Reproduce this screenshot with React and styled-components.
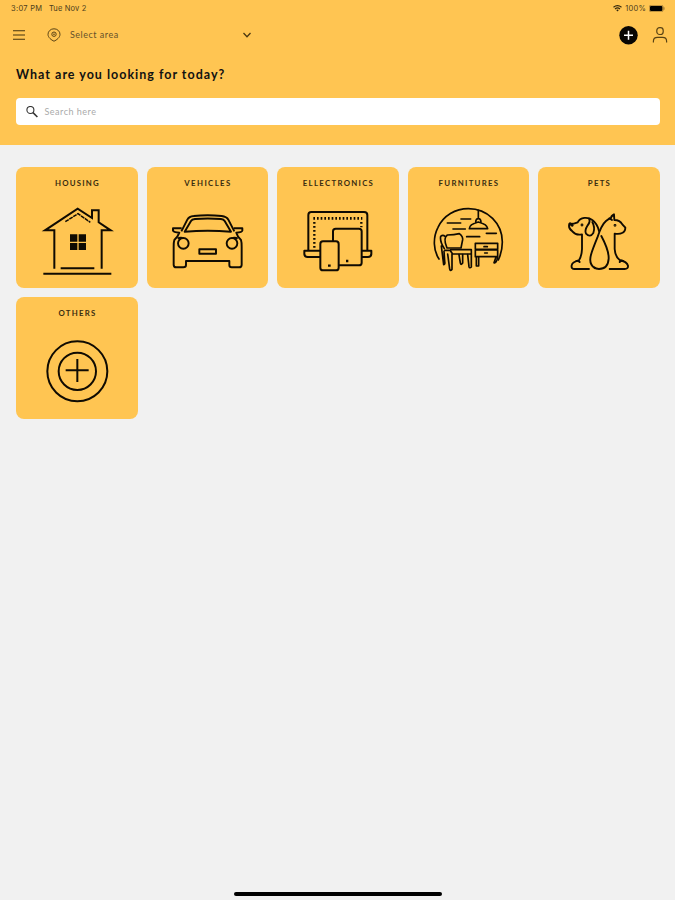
import React from 'react';
import styled, { createGlobalStyle } from 'styled-components';

const GlobalStyle = createGlobalStyle`
  * {
    box-sizing: border-box;
  }
  body {
    margin: 0;
    background: #f1f1f1;
    color: #111;
    font-family: Lato, 'Open Sans', sans-serif;
  }
`;

const Screen = styled.div`
  display: flex;
  flex-direction: column;
  height: 900px;
  overflow: hidden;
`;

const Header = styled.header`
  height: 145px;
  background: #ffc552;
`;

const StatusBar = styled.div`
  display: flex;
  align-items: center;
  height: 17px;
  padding: 0 10px 0 11px;
  font-family: Inter, sans-serif;
  font-size: 7.5px;
  color: #4d3d1c;
  svg {
    display: block;
  }
`;

const StatusText = styled.span`
  margin-right: ${(props) => props.$gap || 0}px;
  letter-spacing: ${(props) => props.$spacing || 0}px;
`;

const StatusRight = styled.div`
  display: flex;
  align-items: center;
  gap: 3px;
  margin-left: auto;
`;

const NavBar = styled.nav`
  display: flex;
  align-items: center;
  height: 36px;
  padding: 0 7.5px 0 12px;
  svg {
    display: block;
  }
`;

const AreaSelect = styled.div`
  display: flex;
  align-items: center;
  justify-content: space-between;
  width: 205px;
  margin-left: 21px;
  font-size: 9px;
  letter-spacing: 0.5px;
  color: #66512a;
`;

const AreaLabel = styled.span`
  flex: 1;
  margin-left: 9px;
  line-height: 12px;
  margin-bottom: 1px;
`;

const NavActions = styled.div`
  display: flex;
  align-items: center;
  gap: 14px;
  margin-left: auto;
`;

const Heading = styled.h1`
  margin: 13px 16px 0;
  font-size: 12.5px;
  line-height: 18px;
  font-weight: 700;
  letter-spacing: 1px;
  white-space: nowrap;
`;

const SearchBox = styled.div`
  display: flex;
  align-items: center;
  gap: 7px;
  height: 27px;
  margin: 14px 15.5px 0;
  padding-left: 10px;
  border-radius: 4px;
  background: #fff;
  font-size: 9px;
  letter-spacing: 0.5px;
  color: #aaa;
`;

const Grid = styled.main`
  display: grid;
  grid-template-columns: repeat(5, 1fr);
  grid-auto-rows: 121.8px;
  gap: 8.7px;
  flex: 1;
  padding: 21.6px 15.2px 0 16px;
`;

const Card = styled.div`
  display: flex;
  flex-direction: column;
  align-items: center;
  padding-top: 10px;
  border-radius: 8px;
  background: #ffc552;
  svg {
    display: block;
    width: 76px;
    height: 76px;
    margin-top: 16px;
    fill: none;
    stroke: #100b02;
    stroke-width: ${(props) => props.$stroke || 6};
  }
`;

const CardTitle = styled.h2`
  margin: 0;
  padding-left: 1.2px;
  font-size: 7.8px;
  line-height: 12px;
  font-weight: 700;
  letter-spacing: ${(props) => props.$spacing}px;
  color: #3a2c10;
`;

const HomeIndicator = styled.div`
  align-self: center;
  width: 208px;
  height: 4px;
  margin-bottom: 4px;
  border-radius: 2px;
  background: #000;
`;

const WifiIcon = () => (
  <svg width="9" height="7" viewBox="0 0 9 7" fill="none" stroke="#33270d" strokeWidth="1.2">
    <path d="M.5 2.3Q4.5-.9 8.5 2.3M2 3.9Q4.5 2 7 3.9" />
    <path d="M3.2 5 4.5 6.4 5.8 5Q4.5 4.2 3.2 5Z" fill="#33270d" stroke="none" />
  </svg>
);

const BatteryIcon = () => (
  <svg width="16" height="7" viewBox="0 0 16 7">
    <rect x=".3" y=".3" width="13.8" height="6.4" rx="1.6" fill="none" stroke="#7d602a" strokeWidth=".6" />
    <rect x="1" y="1" width="12.4" height="5" rx="1" fill="#000" />
    <path d="M15 2.3v2.4" stroke="#7d602a" strokeWidth=".8" />
  </svg>
);

const MenuIcon = () => (
  <svg width="14" height="12" viewBox="0 0 14 12" stroke="#44350f" strokeWidth="1.1">
    <path d="M1 1.8h12M1 6h12M1 10.2h12" />
  </svg>
);

const PinIcon = () => (
  <svg width="14" height="14" viewBox="0 0 14 14" fill="none" stroke="#5b4416" strokeWidth="1">
    <path d="M7 13.2C4.4 12 1 9.6 1 6.3a6 5.5 0 0 1 12 0C13 9.6 9.6 12 7 13.2Z" />
    <circle cx="7" cy="6.2" r="2.2" />
    <circle cx="7" cy="6.2" r=".4" />
  </svg>
);

const ChevronIcon = () => (
  <svg width="10" height="8" viewBox="0 0 10 8" fill="none" stroke="#4a3811" strokeWidth="1.3">
    <path d="M1.5 2 5 5.7 8.5 2" />
  </svg>
);

const AddIcon = () => (
  <svg width="19" height="19" viewBox="0 0 19 19">
    <circle cx="9.5" cy="9.2" r="9.2" fill="#080603" />
    <path d="M9.5 4.7v9M5 9.2h9" stroke="#fff" strokeWidth="1.5" />
  </svg>
);

const UserIcon = () => (
  <svg width="16" height="18" viewBox="0 0 16 18" fill="none" stroke="#594314" strokeWidth="1.2">
    <rect x="4.8" y="1.7" width="6.4" height="6.8" rx="2.8" />
    <path d="M1.4 16.5v-1.3Q1.4 11.4 5.5 11.4h5q4.1 0 4.1 3.8v1.3" />
  </svg>
);

const SearchIcon = () => (
  <svg width="12" height="12" viewBox="0 0 12 12" fill="none" stroke="#333" strokeWidth="1.1">
    <circle cx="4.4" cy="4" r="3.5" />
    <path d="m7 6.6 4.4 4.4" strokeWidth="1.5" />
  </svg>
);

const HouseIcon = () => (
  <svg viewBox="87 135 228 228">
    <path d="M133 326V211H105L203 146l43 28V151h20v36l36 24H275V326" />
    <path d="m166 185 38-24 37 26" strokeWidth="4.5" strokeDasharray="12 2" />
    <path d="M152 324.5H253M100 341H304" />
    <path
      d="M180 223h22v22h-22ZM206 223h22v22h-22ZM180 249h22v21h-22ZM206 249h22v21h-22Z"
      fill="#100b02"
      stroke="none"
    />
  </svg>
);

const CarIcon = () => (
  <svg viewBox="13 -1 228 228" strokeLinejoin="round">
    <path d="M50 78 68 43Q73 33 87 32Q129 27 171 32Q186 34 191 43L209 78" />
    <path d="M60 79 79 47Q82 42 91 41Q129 38 169 41Q177 42 180 47L199 79Q129 74 60 79Z" />
    <path d="M51 69H25V76Q27 81 44 82Q40 94 29 104Q27 110 27 124V178Q27 186 35 186H56Q64 186 64 179V167H194V179Q194 186 201 186H223Q231 186 231 178V124Q231 110 229 104Q218 94 215 82Q232 81 233 76V69H207" />
    <circle cx="56" cy="114" r="16" />
    <circle cx="202" cy="114" r="16" />
    <path d="M39 100Q45 96 54 98M219 100Q213 96 204 98" />
    <path d="M104 132H154V145H104Z" />
  </svg>
);

const DevicesIcon = () => (
  <svg viewBox="85 135 228 228" strokeLinejoin="round">
    <path d="M110 272V165Q110 156 119 156H277Q287 156 287 165V272" />
    <path d="M146 291H108Q98 291 98 281V272H146M270 272H299V281Q299 291 289 291H270" />
    <path d="M125 175H272" strokeWidth="8" strokeDasharray="5 6" />
    <path d="M128 186V264M269 186V202" strokeWidth="7" strokeDasharray="5 7" />
    <path d="M184 244V214Q184 206 192 206H262Q270 206 270 214V308Q270 316 262 316H201" />
    <rect x="146" y="244" width="55" height="87" rx="8" />
    <path d="M223 303h7M169 317h8" strokeWidth="7" />
  </svg>
);

const FurnitureIcon = () => (
  <svg viewBox="6 9 228 228" strokeLinecap="round" strokeLinejoin="round">
    <path d="M33 171C16 146 14 107 30 76C47 40 82 20 121 20C179 20 223 65 223 120Q223 148 211 174" />
    <path d="M151 25v22M143 62q0-12 8-12t8 12M124 80q0-13 27-20q27 7 28 20Z" />
    <path d="M99 51h29M58 63h40M75 81h37M116 104h39M175 94h30" />
    <path d="M57 138Q44 108 58 99Q79 99 94 95Q105 103 104 113L99 138Z" />
    <path d="M49 140Q35 118 38 103Q45 97 51 103M40 132L47 188Q52 187 50 178L48 148" />
    <path d="M50 145H66L74 156H130V143H68M72 156V202Q66 209 65 201L59 156" />
    <path d="M130 157V195Q125 200 123 194L119 158M104 158V183Q98 191 97 183L93 158" />
    <path d="M142 124H209V142H142ZM142 144H209V164H142ZM145 165V192H152V165M204 165L198 182Q205 185 209 166" />
    <path d="M168 134h10M170 153h8" />
  </svg>
);

const PetsIcon = () => (
  <svg viewBox="4 -2 228 228" strokeLinecap="round" strokeLinejoin="round">
    <path d="M118 76Q113 54 98 43C85 33 62 34 54 50Q44 55 29 55Q25 67 38 77Q49 90 67 86V130Q66 151 58 164Q38 168 36 179Q34 190 45 190H88" />
    <path d="M88 39Q93 48 84 59Q74 75 79 84Q91 97 101 82Q107 66 98 49" />
    <path d="M31 54l7 5" strokeWidth="8" />
    <path d="M60 169q-5-5-10-3M180 169q5-5 10-3" />
    <path d="M106 188Q86 175 94 147Q99 130 113 96Q125 58 139 46Q147 39 154 37Q154 31 163 26L164 43Q181 43 188 56L197 66Q197 78 187 82Q181 86 165 84V130Q167 154 180 163Q202 168 205 180Q206 190 195 190H150" />
    <path d="M125 91Q148 134 147 159Q145 190 118 190Q109 190 103 185" />
    <path d="M149 38 157 43" />
    <circle cx="67" cy="58" r="1.5" />
    <circle cx="166" cy="59" r="1.5" />
  </svg>
);

const OthersIcon = () => (
  <svg viewBox="87 129 228 228">
    <circle cx="202" cy="238" r="90" />
    <circle cx="202" cy="238" r="56" />
    <path d="M202 201V270M167 235H236" />
  </svg>
);

const categories = [
  { title: 'HOUSING', icon: HouseIcon, spacing: 1.2 },
  { title: 'VEHICLES', icon: CarIcon, spacing: 1.4, stroke: 5.8 },
  { title: 'ELLECTRONICS', icon: DevicesIcon, spacing: 1.3 },
  { title: 'FURNITURES', icon: FurnitureIcon, spacing: 1.3, stroke: 5 },
  { title: 'PETS', icon: PetsIcon, spacing: 1.25, stroke: 5.6 },
  { title: 'OTHERS', icon: OthersIcon, spacing: 1.25 },
];

const App = () => {
  return (
    <Screen>
      <GlobalStyle />
      <Header>
        <StatusBar>
          <StatusText $gap={6.5} $spacing={0.3}>
            3:07 PM
          </StatusText>
          <StatusText $spacing={0.15}>Tue Nov 2</StatusText>
          <StatusRight>
            <WifiIcon />
            <StatusText $spacing={0.2}>100%</StatusText>
            <BatteryIcon />
          </StatusRight>
        </StatusBar>
        <NavBar>
          <MenuIcon />
          <AreaSelect>
            <PinIcon />
            <AreaLabel>Select area</AreaLabel>
            <ChevronIcon />
          </AreaSelect>
          <NavActions>
            <AddIcon />
            <UserIcon />
          </NavActions>
        </NavBar>
        <Heading>What are you looking for today?</Heading>
        <SearchBox>
          <SearchIcon />
          Search here
        </SearchBox>
      </Header>
      <Grid>
        {categories.map(({ title, icon: Icon, spacing, stroke }) => (
          <Card key={title} $stroke={stroke}>
            <CardTitle $spacing={spacing}>{title}</CardTitle>
            <Icon />
          </Card>
        ))}
      </Grid>
      <HomeIndicator />
    </Screen>
  );
};

export default App;
